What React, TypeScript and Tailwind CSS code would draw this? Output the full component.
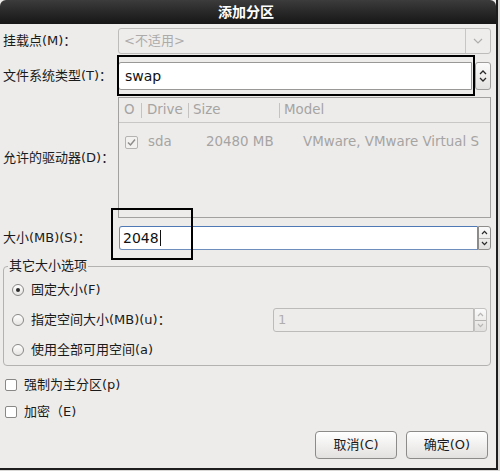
import React from "react";

const font = { fontFamily: '"DejaVu Sans", "Noto Sans CJK SC", sans-serif' };

function Label({ children }: { children: React.ReactNode }) {
  return <div className="w-[118px] shrink-0 pl-[3px] text-[13px] text-[#1a1a1a]">{children}</div>;
}

function SpinIcon() {
  return (
    <svg width="8" height="14" viewBox="0 0 8 14">
      <path d="M1 5 L4 2 L7 5" fill="none" stroke="#2a2a2a" strokeWidth="1.3" />
      <path d="M1 9 L4 12 L7 9" fill="none" stroke="#2a2a2a" strokeWidth="1.3" />
    </svg>
  );
}

function SplitSpin({ disabled = false }: { disabled?: boolean }) {
  const c = disabled ? "#b8b6b4" : "#2a2a2a";
  return (
    <div
      className={`flex w-[13px] shrink-0 flex-col rounded-r-[3px] border ${
        disabled ? "border-[#c4c2c0]" : "border-[#8f8d8b]"
      } bg-gradient-to-b from-[#fafafa] to-[#e2e0de]`}
    >
      <div className="flex flex-1 items-center justify-center border-b border-[#b5b3b1]">
        <svg width="7" height="5" viewBox="0 0 7 5">
          <path d="M1 4 L3.5 1.3 L6 4" fill="none" stroke={c} strokeWidth="1.2" />
        </svg>
      </div>
      <div className="flex flex-1 items-center justify-center">
        <svg width="7" height="5" viewBox="0 0 7 5">
          <path d="M1 1 L3.5 3.7 L6 1" fill="none" stroke={c} strokeWidth="1.2" />
        </svg>
      </div>
    </div>
  );
}

function Radio({ checked = false }: { checked?: boolean }) {
  return (
    <span className="flex h-[12px] w-[12px] items-center justify-center rounded-full border border-[#8a8886] bg-gradient-to-b from-[#ffffff] to-[#e6e4e2]">
      {checked && <span className="h-[4px] w-[4px] rounded-full bg-[#2b2b2b]" />}
    </span>
  );
}

function Check() {
  return <span className="h-[12px] w-[12px] rounded-[2px] border border-[#8a8886] bg-white" />;
}

export default function App() {
  return (
    <div className="relative h-[471px] w-[500px] overflow-hidden bg-[#d9d8d6]" style={font}>
      <div className="flex h-[470px] w-[498px] flex-col border-b-2 border-r-2 border-[#1e1e1e] bg-[#edeceb]">
        <div className="flex h-[24px] shrink-0 items-center justify-center rounded-t-[6px] bg-gradient-to-b from-[#3c3c3c] to-[#161616] pr-[4px] text-[14px] font-bold text-white">
          添加分区
        </div>

        <div className="flex flex-col pr-[5px]">
          <div className="mt-[4px] flex h-[26px] items-center">
            <Label>挂载点(M)：</Label>
            <div className="flex h-full flex-1 items-center rounded-[3px] border border-[#bebcba] bg-[#eeedec]">
              <span className="flex-1 pl-[5px] text-[13px] text-[#adabaa]">&lt;不适用&gt;</span>
              <span className="flex h-full w-[25px] items-center justify-center border-l border-[#c8c6c4]">
                <svg width="10" height="6" viewBox="0 0 10 6">
                  <path d="M1 1 L5 5 L9 1" fill="none" stroke="#b0aeac" strokeWidth="1.2" />
                </svg>
              </span>
            </div>
          </div>

          <div className="mt-[8px] flex h-[28px] items-center">
            <Label>文件系统类型(T)：</Label>
            <div className="flex h-full flex-1 items-center gap-[3px]">
              <div className="flex h-full flex-1 items-center rounded-l-[3px] border border-[#9a9896] bg-white pl-[6px] text-[14px] text-[#111]">
                swap
              </div>
              <div className="flex h-full w-[16px] items-center justify-center rounded-[3px] border border-[#a09e9c] bg-gradient-to-b from-[#fbfbfb] to-[#e4e2e0]">
                <SpinIcon />
              </div>
            </div>
          </div>

          <div className="mt-[7px] flex h-[121px] items-center">
            <Label>允许的驱动器(D)：</Label>
            <div className="flex h-full flex-1 flex-col border border-[#a3a19f] bg-[#edeceb] text-[13.4px] text-[#a6a4a2]">
              <div className="flex h-[25px] items-center border-b border-[#c9c7c5]">
                <span className="w-[22px] pl-[5px]">O</span>
                <span className="h-[15px] border-l border-[#c5c3c1]" />
                <span className="w-[46px] pl-[5px]">Drive</span>
                <span className="h-[15px] border-l border-[#c5c3c1]" />
                <span className="w-[90px] pl-[4px]">Size</span>
                <span className="h-[15px] border-l border-[#c5c3c1]" />
                <span className="pl-[4px]">Model</span>
              </div>
              <div className="mt-[9px] flex items-center">
                <span className="ml-[6px] flex h-[13px] w-[13px] items-center justify-center rounded-[2px] border border-[#b5b3b1] bg-[#f2f1f0]">
                  <svg width="9" height="9" viewBox="0 0 9 9">
                    <path d="M1 4.5 L3.5 7 L8 1.5" fill="none" stroke="#8f8d8b" strokeWidth="1.5" />
                  </svg>
                </span>
                <span className="ml-[10px] w-[58px]">sda</span>
                <span className="w-[97px]">20480 MB</span>
                <span className="whitespace-nowrap">VMware, VMware Virtual S</span>
              </div>
            </div>
          </div>

          <div className="mt-[8px] flex h-[24px] items-center">
            <Label>大小(MB)(S)：</Label>
            <div className="flex h-full flex-1 pl-px">
              <div className="flex h-full flex-1 items-center rounded-l-[3px] border border-[#6e8fbd] border-t-[#4f79b4] bg-white pl-[3px] text-[14px] text-[#111]">
                2048
                <span className="ml-[1px] h-[16px] w-px bg-[#111]" />
              </div>
              <SplitSpin />
            </div>
          </div>
        </div>

        <div className="relative mx-[3px] mr-[5px] mt-[16px] h-[100px] rounded-[4px] border border-[#b4b2b0]">
          <span className="absolute left-[4px] top-[-9px] bg-[#edeceb] px-px text-[13px] leading-[16px] text-[#1a1a1a]">
            其它大小选项
          </span>
          <div className="flex flex-col pt-[16px] text-[13px] text-[#1a1a1a]">
            <div className="flex h-[14px] items-center gap-[7px] pl-[8px]">
              <Radio checked />
              <span>固定大小(F)</span>
            </div>
            <div className="mt-[16px] flex h-[14px] items-center">
              <div className="flex w-[269px] items-center gap-[7px] pl-[8px]">
                <Radio />
                <span>指定空间大小(MB)(u)：</span>
              </div>
              <div className="flex h-[24px] w-[214px]">
                <div className="flex flex-1 items-center rounded-l-[3px] border border-[#bdbbb9] bg-[#edeceb] pl-[4px] text-[13px] text-[#b0aeac]">
                  1
                </div>
                <SplitSpin disabled />
              </div>
            </div>
            <div className="mt-[16px] flex h-[14px] items-center gap-[7px] pl-[8px]">
              <Radio />
              <span>使用全部可用空间(a)</span>
            </div>
          </div>
        </div>

        <div className="mt-[12px] flex flex-col gap-[13px] pl-[5px] text-[13px] text-[#1a1a1a]">
          <div className="flex h-[14px] items-center gap-[7px]">
            <Check />
            <span>强制为主分区(p)</span>
          </div>
          <div className="flex h-[14px] items-center gap-[7px]">
            <Check />
            <span>加密（E)</span>
          </div>
        </div>

        <div className="mt-[12px] flex justify-end gap-[9px] pr-[8px]">
          <button className="h-[28px] w-[82px] rounded-[4px] border border-[#8d8b89] bg-gradient-to-b from-[#ffffff] to-[#e3e1df] text-[13px] text-[#1a1a1a]">
            取消(C)
          </button>
          <button className="h-[28px] w-[82px] rounded-[4px] border border-[#8d8b89] bg-gradient-to-b from-[#ffffff] to-[#e3e1df] text-[13px] text-[#1a1a1a]">
            确定(O)
          </button>
        </div>
      </div>

      <div className="pointer-events-none absolute left-[117px] top-[55px] h-[41px] w-[358px] border-2 border-black" />
      <div className="pointer-events-none absolute left-[111px] top-[208px] h-[52px] w-[82px] border-2 border-black" />
    </div>
  );
}
